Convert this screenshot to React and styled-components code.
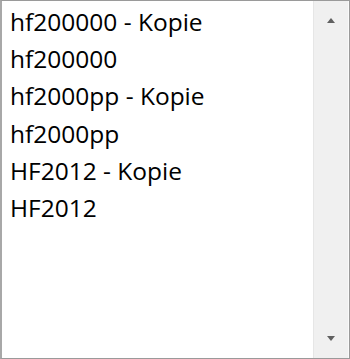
import React from 'react';
import styled, { createGlobalStyle } from 'styled-components';

const Global = createGlobalStyle`
  html, body { margin: 0; padding: 0; background: #fff; }
  body { font-family: "Open Sans", "Noto Sans", "Liberation Sans", sans-serif; }
`;

const ListBox = styled.div`
  box-sizing: border-box;
  width: 350px;
  height: 359px;
  display: flex;
  border: 1px solid #9a9a9a;
  border-left: 2px solid #a8a8a8;
  background: #fff;
`;

const Items = styled.ul`
  flex: 1;
  list-style: none;
  margin: 0;
  padding: 2px 0 0 8px;
`;

const Item = styled.li`
  height: 37.2px;
  line-height: 37px;
  font-size: 24.5px;
  color: #000;
  white-space: nowrap;
`;

const ScrollBar = styled.div`
  width: 34px;
  display: flex;
  flex-direction: column;
  justify-content: space-between;
  align-items: center;
  background: #f0f0f0;
  border-left: 1px solid #e6e6e6;
  border-right: 1px solid #fafafa;
`;

const Arrow = styled.div`
  width: 0;
  height: 0;
  border-left: 4px solid transparent;
  border-right: 4px solid transparent;
  margin: ${p => (p.down ? '0 0 17px' : '17px 0 0')};
  ${p => p.down
    ? 'border-top: 5px solid #606060;'
    : 'border-bottom: 5px solid #606060;'}
`;

const files = [
  'hf200000 - Kopie',
  'hf200000',
  'hf2000pp - Kopie',
  'hf2000pp',
  'HF2012 - Kopie',
  'HF2012',
];

export default function App() {
  return (
    <>
      <Global />
      <ListBox>
        <Items>
          {files.map(f => <Item key={f}>{f}</Item>)}
        </Items>
        <ScrollBar>
          <Arrow />
          <Arrow down />
        </ScrollBar>
      </ListBox>
    </>
  );
}
